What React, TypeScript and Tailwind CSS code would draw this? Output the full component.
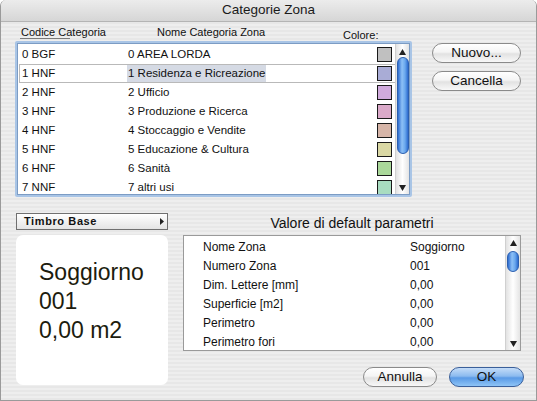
import React from "react";

const rows = [
  { code: "0 BGF", name: "0 AREA LORDA", color: "#c0c0c0" },
  { code: "1 HNF", name: "1 Residenza e Ricreazione", color: "#a9acd6" },
  { code: "2 HNF", name: "2 Ufficio", color: "#d0aadc" },
  { code: "3 HNF", name: "3 Produzione e Ricerca", color: "#daa9c9" },
  { code: "4 HNF", name: "4 Stoccaggio e Vendite", color: "#d6b5a8" },
  { code: "5 HNF", name: "5 Educazione & Cultura", color: "#dad8a4" },
  { code: "6 HNF", name: "6 Sanità", color: "#aad89a" },
  { code: "7 NNF", name: "7 altri usi", color: "#a8dcc0" },
];

const params = [
  ["Nome Zona", "Soggiorno"],
  ["Numero Zona", "001"],
  ["Dim. Lettere [mm]", "0,00"],
  ["Superficie [m2]", "0,00"],
  ["Perimetro", "0,00"],
  ["Perimetro fori", "0,00"],
];

function Arrow({ up }: { up?: boolean }) {
  return (
    <svg width="7" height="6" viewBox="0 0 7 6">
      {up ? <polygon points="3.5,0 7,6 0,6" fill="#222" /> : <polygon points="0,0 7,0 3.5,6" fill="#222" />}
    </svg>
  );
}

function AquaButton({ children, w, blue }: { children: React.ReactNode; w: string; blue?: boolean }) {
  return (
    <div
      className={`${w} h-[20px] rounded-full flex items-center justify-center text-[13.5px] text-[#111] ${
        blue
          ? "border border-[#3a5f9a] bg-[linear-gradient(180deg,#c4dcf8_0%,#8cbbef_45%,#5a9ae6_55%,#8ec4f6_100%)]"
          : "border border-[#8a8a8a] bg-[linear-gradient(180deg,#ffffff_0%,#f4f4f4_45%,#e2e2e2_55%,#f8f8f8_100%)]"
      }`}
    >
      {children}
    </div>
  );
}

export default function App() {
  return (
    <div className="w-[537px] h-[401px] overflow-hidden flex flex-col font-['Liberation_Sans',Arial,sans-serif] text-[#111] rounded-t-[6px] border-x border-b border-[#9a9a9a] bg-[repeating-linear-gradient(180deg,#eeeeee_0px,#eeeeee_2px,#e7e7e7_2px,#e7e7e7_4px)]">
      {/* Title bar */}
      <div className="h-[22px] shrink-0 flex items-center justify-center text-[13.5px] text-[#1a1a1a] border-b border-[#b4b4b4] bg-[linear-gradient(180deg,#ececec,#d6d6d6)]">
        Categorie Zona
      </div>

      <div className="flex-1 flex flex-col pl-[14px] pr-[13px]">
        {/* Top section */}
        <div className="flex">
          <div className="w-[397px] shrink-0 flex flex-col">
            <div className="h-[19px] relative text-[11px]">
              <span className="absolute left-[6px] top-[2px]">Codice Categoria</span>
              <span className="absolute left-[5px] top-[16px] w-[50px] h-px bg-[#7a7a7a]" />
              <span className="absolute left-[142px] top-[2px]">Nome Categoria Zona</span>
              <span className="absolute left-[328px] top-[5px]">Colore:</span>
            </div>
            <div className="h-[156px] p-[2px] bg-[#a9c5e6] rounded-[2px]">
              <div className="h-full border border-[#7c9cc4] bg-white flex overflow-hidden">
                {/* code column */}
                <div className="w-[110px] shrink-0 pt-[1px] pl-[1px] text-[11.5px]">
                  {rows.map((r, i) => (
                    <div
                      key={i}
                      className={`h-[19px] flex items-center whitespace-nowrap ${
                        i === 1 ? "border-y border-l border-[#b9b9b9] pl-[2px]" : "pl-[3px]"
                      }`}
                    >
                      {r.code}
                    </div>
                  ))}
                </div>
                {/* name column */}
                <div className="flex-1 pt-[1px] text-[11.5px]">
                  {rows.map((r, i) => (
                    <div
                      key={i}
                      className={`h-[19px] flex items-center whitespace-nowrap ${
                        i === 1 ? "border-y border-[#b9b9b9]" : ""
                      }`}
                    >
                      <span className={i === 1 ? "bg-[#d5dae4] px-[1px] -ml-[1px]" : ""}>{r.name}</span>
                    </div>
                  ))}
                </div>
                {/* swatch column */}
                <div className="w-[18px] shrink-0 pt-[1px]">
                  {rows.map((r, i) => (
                    <div
                      key={i}
                      className={`h-[19px] flex items-center ${i === 1 ? "border-y border-[#b9b9b9]" : ""}`}
                    >
                      <div className="w-[15px] h-[15px] border border-[#1a1a1a]" style={{ backgroundColor: r.color }} />
                    </div>
                  ))}
                </div>
                {/* Scrollbar */}
                <div className="w-[14px] shrink-0 flex flex-col items-center bg-[linear-gradient(90deg,#e2e2e2,#ffffff_50%,#e4e4e4)] border-l border-[#d0d0d0]">
                  <div className="h-[13px] flex items-center justify-center pt-[2px]">
                    <Arrow up />
                  </div>
                  <div className="w-[12px] h-[97px] rounded-full border border-[#2b5fb0] bg-[linear-gradient(90deg,#2e6ccf,#8dc0f6_40%,#6aa8ee_70%,#2e6ccf)]" />
                  <div className="flex-1" />
                  <div className="h-[12px] flex items-center justify-center">
                    <Arrow />
                  </div>
                </div>
              </div>
            </div>
          </div>
          <div className="ml-[20px] pt-[21px] flex flex-col gap-[8px]">
            <AquaButton w="w-[89px]">Nuovo...</AquaButton>
            <AquaButton w="w-[89px]">Cancella</AquaButton>
          </div>
        </div>

        {/* Bottom section */}
        <div className="flex mt-[15px]">
          <div className="w-[152px] shrink-0 flex flex-col ml-[1px]">
            <div className="h-[17px] mt-[1px] flex items-center justify-between pl-[7px] pr-[3px] border border-[#707070] bg-[linear-gradient(180deg,#ffffff,#e4e4e4)]">
              <span className="text-[11px] font-bold tracking-[0.6px]">Timbro Base</span>
              <svg width="4" height="7" viewBox="0 0 4 7">
                <polygon points="0,0 4,3.5 0,7" fill="#222" />
              </svg>
            </div>
            <div className="mt-[5px] h-[150px] rounded-[7px] bg-white pl-[23px] pt-[23px] text-[23px] leading-[29px] text-[#1c1c0e]">
              <div>Soggiorno</div>
              <div>001</div>
              <div>0,00 m2</div>
            </div>
          </div>
          <div className="ml-[15px] w-[341px] shrink-0 flex flex-col">
            <div className="h-[23px] w-[338px] flex items-center justify-center text-[14px]">
              Valore di default parametri
            </div>
            <div className="w-[338px] h-[116px] border border-[#9a9a9a] bg-white flex">
              <div className="flex-1 pt-[1px] text-[12px]">
                {params.map(([k, v], i) => (
                  <div key={i} className="h-[19px] flex items-center">
                    <div className="w-[226px] pl-[19px]">{k}</div>
                    <div>{v}</div>
                  </div>
                ))}
              </div>
              <div className="w-[15px] flex flex-col items-center bg-[linear-gradient(90deg,#e2e2e2,#ffffff_50%,#e4e4e4)] border-l border-[#d0d0d0]">
                <div className="h-[12px] flex items-center justify-center pt-[2px]">
                  <Arrow up />
                </div>
                <div className="mt-[3px] w-[12px] h-[21px] rounded-full border border-[#2b5fb0] bg-[linear-gradient(90deg,#2e6ccf,#8dc0f6_40%,#6aa8ee_70%,#2e6ccf)]" />
                <div className="flex-1" />
                <div className="h-[12px] flex items-center justify-center">
                  <Arrow />
                </div>
              </div>
            </div>
            <div className="mt-[16px] flex justify-end gap-[12px]">
              <AquaButton w="w-[74px]">Annulla</AquaButton>
              <AquaButton w="w-[75px]" blue>
                OK
              </AquaButton>
            </div>
          </div>
        </div>
      </div>
    </div>
  );
}
